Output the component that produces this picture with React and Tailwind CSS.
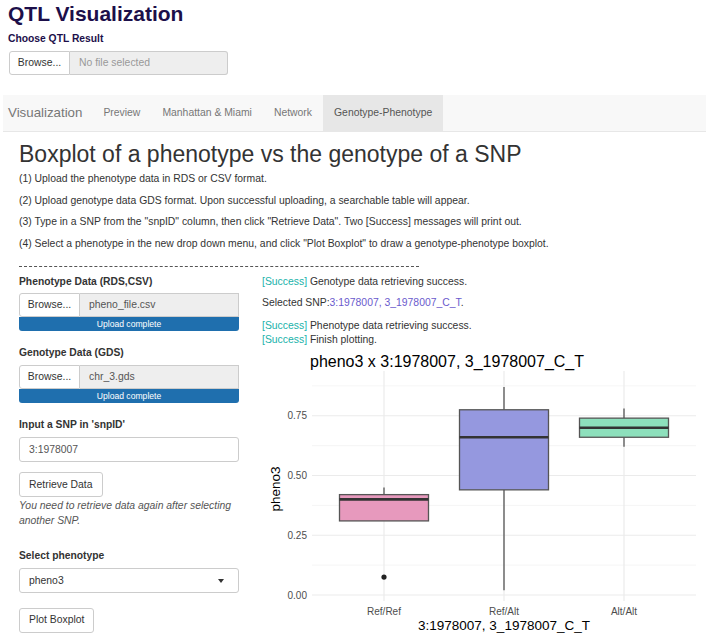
import React from 'react';

const steps = [
    '(1) Upload the phenotype data in RDS or CSV format.',
    '(2) Upload genotype data GDS format. Upon successful uploading, a searchable table will appear.',
    '(3) Type in a SNP from the "snpID" column, then click "Retrieve Data". Two [Success] messages will print out.',
    '(4) Select a phenotype in the new drop down menu, and click "Plot Boxplot" to draw a genotype-phenotype boxplot.',
];

const tabs = [
    { name: 'Preview', active: false },
    { name: 'Manhattan & Miami', active: false },
    { name: 'Network', active: false },
    { name: 'Genotype-Phenotype', active: true },
];

// box stats per genotype group
const groups = [
    { label: 'Ref/Ref', x: 122, fill: '#e799bd', lo: 0.31, q1: 0.31, med: 0.40, q3: 0.42, hi: 0.45, out: [0.075] },
    { label: 'Ref/Alt', x: 242, fill: '#9598df', lo: 0.02, q1: 0.44, med: 0.66, q3: 0.775, hi: 0.87, out: [] },
    { label: 'Alt/Alt', x: 362, fill: '#8de0bc', lo: 0.62, q1: 0.66, med: 0.70, q3: 0.74, hi: 0.78, out: [] },
];

const yv = (v) => 244 - v * 239;

function FileInput({ file, progress }) {
    return (
        <div>
            <div className="flex h-[24px] text-[10.4px]">
                <div className="flex w-[61px] items-center justify-center rounded-l-[3px] border border-[#ccc] bg-white text-[#333]">
                    Browse...
                </div>
                <div
                    className={
                        'flex flex-1 items-center border border-l-0 border-[#ccc] bg-[#eee] pl-[9px] ' +
                        (progress ? 'text-[#555]' : 'rounded-r-[3px] text-[#999]')
                    }
                >
                    {file}
                </div>
            </div>
            {progress && (
                <div className="flex h-[14px] items-center justify-center rounded-b-[3px] bg-[#1f6fae] text-[8.6px] text-white">
                    Upload complete
                </div>
            )}
        </div>
    );
}

function Label({ children }) {
    return <div className="text-[10.3px] font-bold leading-[14px] text-[#333]">{children}</div>;
}

function Button({ children }) {
    return (
        <div className="inline-flex h-[25px] items-center rounded-[3px] border border-[#ccc] bg-white px-[9px] text-[10.4px] text-[#333]">
            {children}
        </div>
    );
}

function Success({ children }) {
    return (
        <div>
            <span className="text-[#20b2aa]">[Success]</span> {children}
        </div>
    );
}

function Boxplot() {
    const majors = [0, 0.25, 0.5, 0.75];
    const minors = [0.125, 0.375, 0.625, 0.875];
    return (
        <svg width="447" height="285" viewBox="0 0 447 285" className="block" style={{ fontFamily: '"Liberation Sans", Arial, sans-serif' }}>
            <text x="48" y="16" fontSize="16" fill="#000">pheno3 x 3:1978007, 3_1978007_C_T</text>
            {minors.map((v) => (
                <line key={v} x1="50" x2="434" y1={yv(v)} y2={yv(v)} stroke="#f3f3f3" strokeWidth="0.8" />
            ))}
            {majors.map((v) => (
                <line key={v} x1="50" x2="434" y1={yv(v)} y2={yv(v)} stroke="#ebebeb" strokeWidth="1.2" />
            ))}
            {groups.map((g) => (
                <line key={g.label} x1={g.x} x2={g.x} y1="20" y2="250" stroke="#ebebeb" strokeWidth="1.2" />
            ))}
            {majors.map((v) => (
                <text key={v} x="45" y={yv(v) + 3.5} fontSize="10" fill="#4d4d4d" textAnchor="end">
                    {v.toFixed(2)}
                </text>
            ))}
            {groups.map((g) => (
                <g key={g.label}>
                    <line x1={g.x} x2={g.x} y1={yv(g.hi)} y2={yv(g.q3)} stroke="#555" strokeWidth="1.3" />
                    <line x1={g.x} x2={g.x} y1={yv(g.q1)} y2={yv(g.lo)} stroke="#555" strokeWidth="1.3" />
                    <rect
                        x={g.x - 44.5}
                        y={yv(g.q3)}
                        width="89"
                        height={yv(g.q1) - yv(g.q3)}
                        fill={g.fill}
                        stroke="#555"
                        strokeWidth="1.3"
                    />
                    <line x1={g.x - 44.5} x2={g.x + 44.5} y1={yv(g.med)} y2={yv(g.med)} stroke="#333" strokeWidth="2.6" />
                    {g.out.map((o) => (
                        <circle key={o} cx={g.x} cy={yv(o)} r="2.6" fill="#222" />
                    ))}
                    <text x={g.x} y="264" fontSize="10" fill="#4d4d4d" textAnchor="middle">
                        {g.label}
                    </text>
                </g>
            ))}
            <text x="242" y="279" fontSize="13.5" fill="#000" textAnchor="middle">3:1978007, 3_1978007_C_T</text>
            <text x="18" y="138" fontSize="13.5" fill="#000" textAnchor="middle" transform="rotate(-90 18 138)">pheno3</text>
        </svg>
    );
}

export default function App() {
    return (
        <div className="h-[635px] w-[709px] overflow-hidden bg-white text-[#333]" style={{ fontFamily: '"Liberation Sans", Arial, sans-serif' }}>
            <div className="px-[8px]">
                <h1 className="pt-[1px] text-[21px] font-bold leading-[26px] text-[#1c0f4a]">QTL Visualization</h1>
                <div className="mt-[5px] text-[10.3px] font-bold leading-[14px] text-[#1c0f4a]">Choose QTL Result</div>
                <div className="mt-[5px] w-[220px] pl-[1px]">
                    <FileInput file="No file selected" />
                </div>
            </div>

            <nav className="mx-[3px] mt-[20px] flex h-[37px] items-stretch border-b border-[#e7e7e7] bg-[#f8f8f8] text-[10.4px] text-[#777]">
                <div className="flex items-center pl-[5px] pr-[10px] text-[13.3px] text-[#777]">Visualization</div>
                {tabs.map((t) => (
                    <div
                        key={t.name}
                        className={'flex items-center px-[11px] ' + (t.active ? 'bg-[#e7e7e7] text-[#555]' : '')}
                    >
                        {t.name}
                    </div>
                ))}
            </nav>

            <div className="px-[19px]">
                <h2 className="mt-[9px] text-[23px] leading-[26px] text-[#333]">Boxplot of a phenotype vs the genotype of a SNP</h2>
                <div className="mt-[5px] text-[10.4px] leading-[14px]">
                    {steps.map((s) => (
                        <p key={s} className="mb-[7.7px]">{s}</p>
                    ))}
                </div>
                <div className="mt-[15px] w-[400px] border-t border-dashed border-[#555]" />

                <div className="mt-[8px] flex">
                    <div className="w-[220px] shrink-0">
                        <Label>Phenotype Data (RDS,CSV)</Label>
                        <div className="mt-[4px]">
                            <FileInput file="pheno_file.csv" progress />
                        </div>
                        <div className="mt-[15px]">
                            <Label>Genotype Data (GDS)</Label>
                        </div>
                        <div className="mt-[5px]">
                            <FileInput file="chr_3.gds" progress />
                        </div>
                        <div className="mt-[15px]">
                            <Label>Input a SNP in 'snpID'</Label>
                        </div>
                        <div className="mt-[5px] flex h-[25px] items-center rounded-[3px] border border-[#ccc] pl-[9px] text-[10.4px] text-[#555]">
                            3:1978007
                        </div>
                        <div className="mt-[9px]">
                            <Button>Retrieve Data</Button>
                        </div>
                        <div className="mt-[1px] text-[10.4px] italic leading-[15px] text-[#555]">
                            You need to retrieve data again after selecting another SNP.
                        </div>
                        <div className="mt-[21px]">
                            <Label>Select phenotype</Label>
                        </div>
                        <div className="mt-[5px] flex h-[25px] items-center justify-between rounded-[3px] border border-[#ccc] pl-[9px] pr-[14px] text-[10.4px] text-[#333]">
                            pheno3
                            <span className="h-0 w-0 border-x-[3.5px] border-t-[4px] border-x-transparent border-t-[#333]" />
                        </div>
                        <div className="mt-[13px]">
                            <Button>Plot Boxplot</Button>
                        </div>
                    </div>

                    <div className="ml-[23px] flex-1">
                        <div className="text-[10.4px] leading-[14px] text-[#333]">
                            <Success>Genotype data retrieving success.</Success>
                            <div className="mt-[7px]">
                                Selected SNP:<span className="text-[#6a5acd]">3:1978007, 3_1978007_C_T</span>.
                            </div>
                            <div className="mt-[9px]">
                                <Success>Phenotype data retrieving success.</Success>
                                <Success>Finish plotting.</Success>
                            </div>
                        </div>
                        <div className="mt-[4px]">
                            <Boxplot />
                        </div>
                    </div>
                </div>
            </div>
        </div>
    );
}
